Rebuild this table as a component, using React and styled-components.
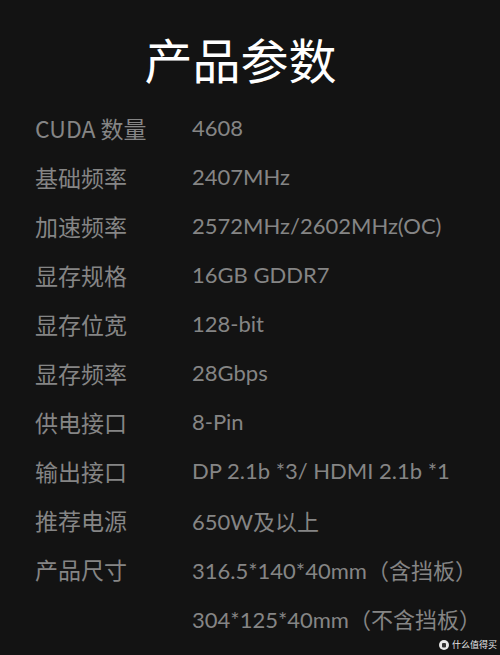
import React from 'react';
import styled, { createGlobalStyle } from 'styled-components';

const GlobalStyle = createGlobalStyle`
  html, body {
    margin: 0;
    padding: 0;
    background: #131313;
  }
  body {
    font-family: Lato, "Noto Sans CJK SC", sans-serif;
  }
`;

const Page = styled.div`
  width: 500px;
  height: 655px;
  background: #131313;
  position: relative;
  overflow: hidden;
`;

const Title = styled.h1`
  margin: 0;
  padding: 31px 19px 0 0;
  height: 72px;
  line-height: 54px;
  text-align: center;
  font-family: "Noto Sans CJK SC", sans-serif;
  font-weight: 400;
  font-size: 48px;
  color: #ffffff;
`;

const Specs = styled.div`
  display: grid;
  grid-template-columns: 157px 1fr;
  grid-auto-rows: 49px;
  padding-left: 35px;
`;

const Cell = styled.div`
  display: flex;
  align-items: center;
  color: #858585;
  white-space: nowrap;
  font-size: ${(p) => (p.$value ? '22px' : '23px')};
  font-family: ${(p) => (p.$value ? 'Lato, "Noto Sans CJK SC", sans-serif' : '"Noto Sans CJK SC", sans-serif')};
`;

const Mark = styled.div`
  position: absolute;
  right: 3px;
  bottom: 4px;
  display: flex;
  align-items: center;
  gap: 3px;
  font-family: "Noto Sans CJK SC", sans-serif;
  font-size: 9px;
  color: #e8e8e8;
`;

const specs = [
  ['CUDA 数量', '4608'],
  ['基础频率', '2407MHz'],
  ['加速频率', '2572MHz/2602MHz(OC)'],
  ['显存规格', '16GB GDDR7'],
  ['显存位宽', '128-bit'],
  ['显存频率', '28Gbps'],
  ['供电接口', '8-Pin'],
  ['输出接口', 'DP 2.1b *3/ HDMI 2.1b *1'],
  ['推荐电源', '650W及以上'],
  ['产品尺寸', '316.5*140*40mm（含挡板）'],
  ['', '304*125*40mm（不含挡板）'],
];

export default function App() {
  return (
    <Page>
      <GlobalStyle />
      <Title>产品参数</Title>
      <Specs>
        {specs.map(([k, v], i) => (
          <React.Fragment key={i}>
            <Cell>{k}</Cell>
            <Cell $value>{v}</Cell>
          </React.Fragment>
        ))}
      </Specs>
      <Mark>
        <svg width="10" height="10" viewBox="0 0 10 10">
          <circle cx="5" cy="5" r="5" fill="#e8e8e8" />
          <rect x="3" y="3" width="4" height="4.5" rx="1" fill="#333" />
        </svg>
        什么值得买
      </Mark>
    </Page>
  );
}
